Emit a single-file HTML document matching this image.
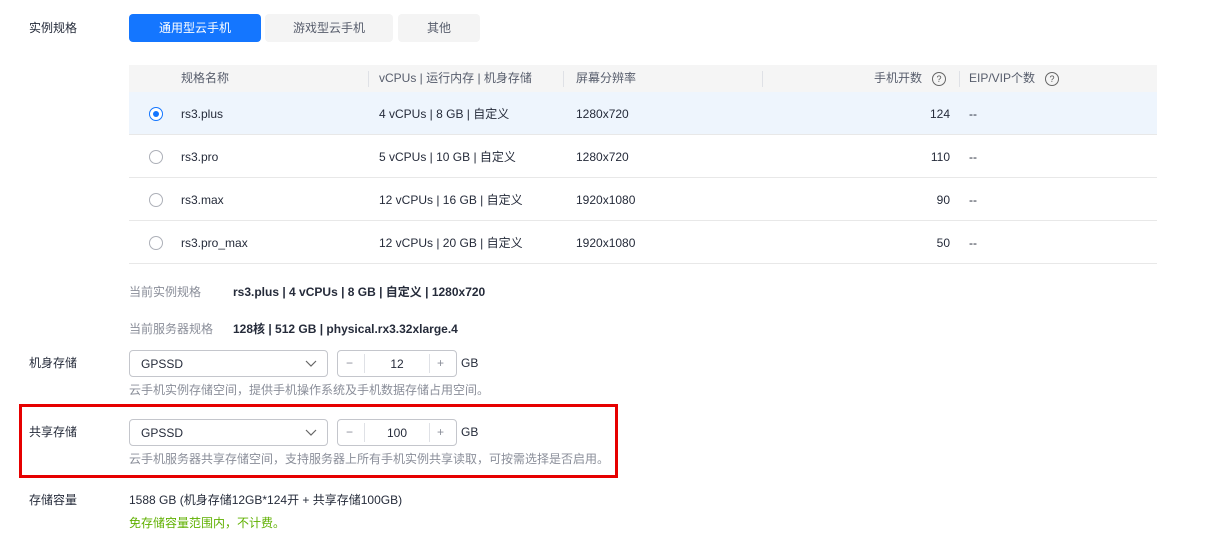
<!DOCTYPE html>
<html><head><meta charset="utf-8"><style>
body{margin:0;width:1220px;height:545px;background:#fff;font-family:"Liberation Sans","Noto Sans CJK SC",sans-serif;font-size:12px;color:#252b3a;position:relative;overflow:hidden}
.a{position:absolute;white-space:nowrap;line-height:16px}
.tab{position:absolute;top:14px;height:28px;line-height:28px;text-align:center;border-radius:4px;background:#f4f4f4;color:#575d6c}
.row{position:absolute;left:129px;width:1028px;height:43px;border-bottom:1px solid #e8e8e8;box-sizing:border-box}
.radio{position:absolute;left:149px;width:14px;height:14px;border:1px solid #adb0b8;border-radius:50%;box-sizing:border-box;background:#fff}
.sep{position:absolute;top:71px;width:1px;height:16px;background:#dfe1e6}
.sel{position:absolute;left:129px;width:199px;height:27px;border:1px solid #c4c6cc;border-radius:4px;box-sizing:border-box}
.step{position:absolute;left:337px;width:120px;height:27px;border:1px solid #c4c6cc;border-radius:4px;box-sizing:border-box}
.q{display:inline-block;width:12px;height:12px;border:1px solid #666;border-radius:50%;font-size:9px;line-height:12px;text-align:center;color:#555;vertical-align:middle}
.gray{color:#8a8e99}
</style></head><body>
<div class="a" style="left:29px;top:20px">实例规格</div>
<div class="tab" style="left:129px;width:132px;background:#1476ff;color:#fff">通用型云手机</div>
<div class="tab" style="left:265px;width:128px">游戏型云手机</div>
<div class="tab" style="left:398px;width:82px">其他</div>

<div style="position:absolute;left:129px;top:65px;width:1028px;height:27px;background:#f5f5f5;border-bottom:1px solid #e8e8e8"></div>
<div class="a" style="left:181px;top:70px;color:#575d6c">规格名称</div>
<div class="sep" style="left:368px"></div>
<div class="a" style="left:379px;top:70px;color:#575d6c">vCPUs | 运行内存 | 机身存储</div>
<div class="sep" style="left:563px"></div>
<div class="a" style="left:576px;top:70px;color:#575d6c">屏幕分辨率</div>
<div class="sep" style="left:762px"></div>
<div class="a" style="left:874px;top:70px;color:#575d6c">手机开数 &nbsp;&nbsp;<span class="q">?</span></div>
<div class="sep" style="left:959px"></div>
<div class="a" style="left:969px;top:70px;color:#575d6c">EIP/VIP个数 &nbsp;&nbsp;<span class="q">?</span></div>

<div class="row" style="top:92px;background:#eef5fd"></div>
<div class="row" style="top:135px"></div>
<div class="row" style="top:178px"></div>
<div class="row" style="top:221px"></div>

<div class="radio" style="top:107px;border:1px solid #1476ff"><div style="position:absolute;left:3px;top:3px;width:6px;height:6px;border-radius:50%;background:#1476ff"></div></div>
<div class="radio" style="top:150px"></div>
<div class="radio" style="top:193px"></div>
<div class="radio" style="top:236px"></div>

<div class="a" style="left:181px;top:106px">rs3.plus</div>
<div class="a" style="left:379px;top:106px">4 vCPUs | 8 GB | 自定义</div>
<div class="a" style="left:576px;top:106px">1280x720</div>
<div class="a" style="right:270px;top:106px">124</div>
<div class="a" style="left:969px;top:106px">--</div>

<div class="a" style="left:181px;top:149px">rs3.pro</div>
<div class="a" style="left:379px;top:149px">5 vCPUs | 10 GB | 自定义</div>
<div class="a" style="left:576px;top:149px">1280x720</div>
<div class="a" style="right:270px;top:149px">110</div>
<div class="a" style="left:969px;top:149px">--</div>

<div class="a" style="left:181px;top:192px">rs3.max</div>
<div class="a" style="left:379px;top:192px">12 vCPUs | 16 GB | 自定义</div>
<div class="a" style="left:576px;top:192px">1920x1080</div>
<div class="a" style="right:270px;top:192px">90</div>
<div class="a" style="left:969px;top:192px">--</div>

<div class="a" style="left:181px;top:235px">rs3.pro_max</div>
<div class="a" style="left:379px;top:235px">12 vCPUs | 20 GB | 自定义</div>
<div class="a" style="left:576px;top:235px">1920x1080</div>
<div class="a" style="right:270px;top:235px">50</div>
<div class="a" style="left:969px;top:235px">--</div>

<div class="a gray" style="left:129px;top:284px">当前实例规格</div>
<div class="a" style="left:233px;top:284px;font-weight:bold">rs3.plus | 4 vCPUs | 8 GB | 自定义 | 1280x720</div>
<div class="a gray" style="left:129px;top:321px">当前服务器规格</div>
<div class="a" style="left:233px;top:321px;font-weight:bold">128核 | 512 GB | physical.rx3.32xlarge.4</div>

<div class="a" style="left:29px;top:355px">机身存储</div>
<div class="sel" style="top:350px"><span class="a" style="left:11px;top:5px">GPSSD</span><svg class="a" style="left:175px;top:8px" width="12" height="10"><path d="M1 2 L6 7 L11 2" fill="none" stroke="#666" stroke-width="1.2"/></svg></div>
<div class="step" style="top:350px"><span class="a gray" style="left:8px;top:4px">−</span><div class="a" style="left:26px;top:3px;width:1px;height:19px;background:#dfe1e6"></div><span class="a" style="left:0;width:118px;text-align:center;top:5px">12</span><div class="a" style="left:91px;top:3px;width:1px;height:19px;background:#dfe1e6"></div><span class="a gray" style="left:99px;top:4px">+</span></div>
<div class="a" style="left:461px;top:355px">GB</div>
<div class="a gray" style="left:129px;top:382px">云手机实例存储空间，提供手机操作系统及手机数据存储占用空间。</div>

<div style="position:absolute;left:19px;top:404px;width:599px;height:74px;border:3px solid #e60000;box-sizing:border-box"></div>
<div class="a" style="left:29px;top:424px">共享存储</div>
<div class="sel" style="top:419px"><span class="a" style="left:11px;top:5px">GPSSD</span><svg class="a" style="left:175px;top:8px" width="12" height="10"><path d="M1 2 L6 7 L11 2" fill="none" stroke="#666" stroke-width="1.2"/></svg></div>
<div class="step" style="top:419px"><span class="a gray" style="left:8px;top:4px">−</span><div class="a" style="left:26px;top:3px;width:1px;height:19px;background:#dfe1e6"></div><span class="a" style="left:0;width:118px;text-align:center;top:5px">100</span><div class="a" style="left:91px;top:3px;width:1px;height:19px;background:#dfe1e6"></div><span class="a gray" style="left:99px;top:4px">+</span></div>
<div class="a" style="left:461px;top:424px">GB</div>
<div class="a gray" style="left:129px;top:451px">云手机服务器共享存储空间，支持服务器上所有手机实例共享读取，可按需选择是否启用。</div>

<div class="a" style="left:29px;top:492px">存储容量</div>
<div class="a" style="left:129px;top:492px">1588 GB (机身存储12GB*124开 + 共享存储100GB)</div>
<div class="a" style="left:129px;top:515px;color:#5fb000">免存储容量范围内，不计费。</div>
</body></html>
